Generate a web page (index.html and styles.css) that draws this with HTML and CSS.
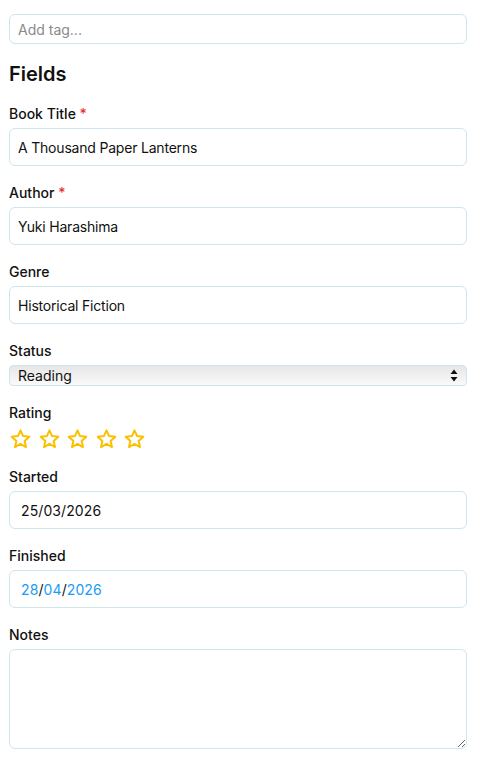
FILE: index.html
```html
<!DOCTYPE html>
<html lang="en">
<head>
<meta charset="utf-8">
<title>Book form</title>
<link rel="stylesheet" href="styles.css">
</head>
<body>
<div class="page">
  <input class="tag-input" type="text" placeholder="Add tag...">
  <h2 class="section-title">Fields</h2>

  <div class="field">
    <label class="label">Book Title <span class="req">*</span></label>
    <div class="control">A Thousand Paper Lanterns</div>
  </div>

  <div class="field">
    <label class="label">Author <span class="req">*</span></label>
    <div class="control">Yuki Harashima</div>
  </div>

  <div class="field">
    <label class="label">Genre</label>
    <div class="control">Historical Fiction</div>
  </div>

  <div class="field">
    <label class="label">Status</label>
    <div class="select">
      <span>Reading</span>
      <svg class="select-arrows" width="8" height="13" viewBox="0 0 8 13"><path d="M4 0.5 L7.5 5 H0.5 Z M4 12.5 L7.5 8 H0.5 Z" fill="#111"/></svg>
    </div>
  </div>

  <div class="field">
    <label class="label">Rating</label>
    <div class="stars">
      <svg class="star" viewBox="0 0 24 24" width="23" height="22"><path d="M12 2.6 L14.8 8.8 L21.6 9.5 L16.5 14.1 L18 20.8 L12 17.3 L6 20.8 L7.5 14.1 L2.4 9.5 L9.2 8.8 Z" fill="none" stroke="#fbc000" stroke-width="2.2" stroke-linejoin="round"/></svg>
      <svg class="star" viewBox="0 0 24 24" width="23" height="22"><path d="M12 2.6 L14.8 8.8 L21.6 9.5 L16.5 14.1 L18 20.8 L12 17.3 L6 20.8 L7.5 14.1 L2.4 9.5 L9.2 8.8 Z" fill="none" stroke="#fbc000" stroke-width="2.2" stroke-linejoin="round"/></svg>
      <svg class="star" viewBox="0 0 24 24" width="23" height="22"><path d="M12 2.6 L14.8 8.8 L21.6 9.5 L16.5 14.1 L18 20.8 L12 17.3 L6 20.8 L7.5 14.1 L2.4 9.5 L9.2 8.8 Z" fill="none" stroke="#fbc000" stroke-width="2.2" stroke-linejoin="round"/></svg>
      <svg class="star" viewBox="0 0 24 24" width="23" height="22"><path d="M12 2.6 L14.8 8.8 L21.6 9.5 L16.5 14.1 L18 20.8 L12 17.3 L6 20.8 L7.5 14.1 L2.4 9.5 L9.2 8.8 Z" fill="none" stroke="#fbc000" stroke-width="2.2" stroke-linejoin="round"/></svg>
      <svg class="star" viewBox="0 0 24 24" width="23" height="22"><path d="M12 2.6 L14.8 8.8 L21.6 9.5 L16.5 14.1 L18 20.8 L12 17.3 L6 20.8 L7.5 14.1 L2.4 9.5 L9.2 8.8 Z" fill="none" stroke="#fbc000" stroke-width="2.2" stroke-linejoin="round"/></svg>
    </div>
  </div>

  <div class="field">
    <label class="label">Started</label>
    <div class="control date">25/03/2026</div>
  </div>

  <div class="field">
    <label class="label">Finished</label>
    <div class="control date"><span class="seg">28</span>/<span class="seg">04</span>/<span class="seg">2026</span></div>
  </div>

  <div class="field">
    <label class="label">Notes</label>
    <textarea class="notes"></textarea>
  </div>
</div>
</body>
</html>
```

FILE: styles.css
```css
* { box-sizing: border-box; }
html, body { margin: 0; padding: 0; background: #fff; }
body {
  font-family: Inter, "Noto Sans", "Liberation Sans", sans-serif;
  color: #111;
  font-size: 14px;
}
.page {
  width: 467px;
  padding: 14px 0 0 9px;
}
.tag-input {
  display: block;
  width: 458px;
  height: 30px;
  border: 1px solid #cde6ee;
  border-radius: 6px;
  padding: 0 8px;
  font-family: inherit;
  font-size: 14px;
  color: #111;
  outline: none;
}
.tag-input::placeholder { color: #8a8a8a; }
.section-title {
  margin: 18px 0 0;
  font-size: 20px;
  line-height: 24px;
  font-weight: 600;
  color: #111;
}
.field { margin-top: 17px; }
.section-title + .field { margin-top: 18px; }
.label {
  display: block;
  font-size: 14px;
  line-height: 20px;
  font-weight: 500;
  margin-bottom: 4px;
  color: #111;
}
.req { color: #e5333a; }
.control {
  width: 458px;
  height: 38px;
  border: 1px solid #cde6ee;
  border-radius: 6px;
  padding: 0 8px;
  display: flex;
  align-items: center;
  font-size: 14px;
  letter-spacing: -0.2px;
  color: #111;
}
.control.date { padding-left: 11px; letter-spacing: 0.1px; }
.seg { color: #1a9cf5; }
.select {
  width: 458px;
  height: 21px;
  border: 1px solid #cde6ee;
  border-radius: 4px;
  background: linear-gradient(#e6e6e6, #fafafa);
  display: flex;
  align-items: center;
  justify-content: space-between;
  padding: 0 8px 0 8px;
  font-size: 14px;
  color: #111;
}
.select-arrows { display: block; }
.stars {
  display: flex;
  gap: 5.5px;
  height: 23px;
  align-items: center;
}
.star { display: block; }
.notes {
  display: block;
  width: 458px;
  height: 100px;
  border: 1px solid #cde6ee;
  border-radius: 6px;
  padding: 8px;
  font-family: inherit;
  font-size: 14px;
  resize: vertical;
  outline: none;
}
```
